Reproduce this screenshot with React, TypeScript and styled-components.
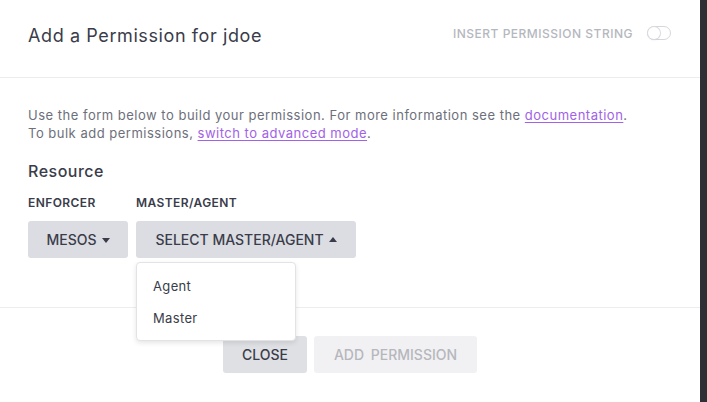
import React from 'react';
import styled, { createGlobalStyle } from 'styled-components';

const GlobalStyle = createGlobalStyle`
  html, body {
    margin: 0;
    padding: 0;
    background: #ffffff;
  }
  body {
    font-family: Inter, "Noto Sans", sans-serif;
    color: #3a3c4a;
    -webkit-font-smoothing: antialiased;
  }
  * {
    box-sizing: border-box;
  }
`;

const Page = styled.div`
  display: flex;
  width: 707px;
  height: 402px;
  overflow: hidden;
`;

const Modal = styled.div`
  width: 700px;
  display: flex;
  flex-direction: column;
  background: #ffffff;
`;

const Backdrop = styled.div`
  flex: 1;
  background: #2e3035;
`;

const Header = styled.div`
  height: 78px;
  padding: 0 29px 6px 28px;
  display: flex;
  align-items: center;
  justify-content: space-between;
  border-bottom: 1px solid #ededf0;
`;

const Title = styled.h1`
  margin: 0;
  font-size: 18px;
  line-height: 22px;
  font-weight: 400;
  letter-spacing: 0.6px;
  color: #3a3c4a;
`;

const ToggleGroup = styled.label`
  display: flex;
  align-items: center;
  gap: 14px;
  margin-bottom: 5px;
`;

const ToggleLabel = styled.span`
  font-size: 12px;
  font-weight: 500;
  letter-spacing: 0.5px;
  color: #b5b7be;
  text-transform: uppercase;
`;

const Toggle = styled.span`
  display: inline-block;
  width: 24px;
  height: 14px;
  border-radius: 7px;
  border: 1px solid #d6d7dc;
  position: relative;

  &::after {
    content: '';
    position: absolute;
    left: 0;
    top: 0;
    width: 12px;
    height: 12px;
    border-radius: 50%;
    background: #ffffff;
    box-shadow: 0 0 0 1px #dadbe0, 0 1px 2px rgba(0, 0, 0, 0.12);
  }
`;

const Body = styled.div`
  padding: 28px 28px 49px;
  border-bottom: 1px solid #ededf0;
`;

const Intro = styled.p`
  margin: 0;
  font-size: 13px;
  line-height: 18px;
  color: #6d6f7b;
  letter-spacing: 0.5px;
`;

const TextLink = styled.a`
  color: #a162e8;
  text-decoration: underline;
  text-underline-offset: 2px;
`;

const SectionTitle = styled.h2`
  margin: 19px 0 14px;
  font-size: 16px;
  line-height: 20px;
  font-weight: 500;
  letter-spacing: 0.5px;
  color: #3a3c4a;
`;

const Fields = styled.div`
  display: flex;
  gap: 8px;
`;

const Field = styled.div`
  display: flex;
  flex-direction: column;
  gap: 10px;
  position: relative;
`;

const FieldLabel = styled.span`
  font-size: 12px;
  line-height: 16px;
  font-weight: 600;
  letter-spacing: 0.4px;
  color: #3a3c4a;
  text-transform: uppercase;
`;

const SelectButton = styled.button<{ width: number }>`
  width: ${p => p.width}px;
  height: 37px;
  border: none;
  border-radius: 3px;
  background: #dcdde2;
  color: #3a3c4a;
  font-family: inherit;
  font-size: 14px;
  font-weight: 500;
  text-transform: uppercase;
  display: flex;
  align-items: center;
  justify-content: center;
  gap: 5px;
  cursor: pointer;
`;

const Caret = styled.span<{ up?: boolean }>`
  width: 0;
  height: 0;
  border-left: 4.5px solid transparent;
  border-right: 4.5px solid transparent;
  ${p => p.up
    ? 'border-bottom: 5px solid #3a3c4a;'
    : 'border-top: 5px solid #3a3c4a;'}
  margin-top: ${p => (p.up ? '-1px' : '1px')};
`;

const Menu = styled.ul`
  position: absolute;
  top: 67px;
  left: 0;
  width: 160px;
  margin: 0;
  padding: 7px 0 6px;
  list-style: none;
  background: #ffffff;
  border: 1px solid #e2e3e7;
  border-radius: 4px;
  box-shadow: 0 2px 5px rgba(0, 0, 0, 0.1);
  z-index: 10;
`;

const MenuItem = styled.li`
  height: 32px;
  padding: 0 16px;
  display: flex;
  align-items: center;
  font-size: 13px;
  color: #3a3c4a;
  letter-spacing: 0.35px;
`;

const Footer = styled.div`
  flex: 1;
  display: flex;
  justify-content: center;
  align-items: flex-start;
  gap: 7px;
  padding-top: 28px;
`;

const FooterButton = styled.button<{ disabled?: boolean; width: number }>`
  width: ${p => p.width}px;
  height: 37px;
  border: none;
  border-radius: 3px;
  font-family: inherit;
  font-size: 14px;
  font-weight: 500;
  text-transform: uppercase;
  word-spacing: 3px;
  background: ${p => (p.disabled ? '#f1f1f3' : '#dfe0e4')};
  color: ${p => (p.disabled ? '#b6b7bd' : '#3a3c4a')};
`;

const App: React.FC = () => (
  <>
    <GlobalStyle />
    <Page>
      <Modal>
        <Header>
          <Title>Add a Permission for jdoe</Title>
          <ToggleGroup>
            <ToggleLabel>Insert Permission String</ToggleLabel>
            <Toggle />
          </ToggleGroup>
        </Header>
        <Body>
          <Intro>
            Use the form below to build your permission. For more information see the{' '}
            <TextLink href="#">documentation</TextLink>.
            <br />
            To bulk add permissions, <TextLink href="#">switch to advanced mode</TextLink>.
          </Intro>
          <SectionTitle>Resource</SectionTitle>
          <Fields>
            <Field>
              <FieldLabel>Enforcer</FieldLabel>
              <SelectButton width={100}>
                Mesos <Caret />
              </SelectButton>
            </Field>
            <Field>
              <FieldLabel>Master/Agent</FieldLabel>
              <SelectButton width={220}>
                Select Master/Agent <Caret up />
              </SelectButton>
              <Menu>
                <MenuItem>Agent</MenuItem>
                <MenuItem>Master</MenuItem>
              </Menu>
            </Field>
          </Fields>
        </Body>
        <Footer>
          <FooterButton width={84}>Close</FooterButton>
          <FooterButton width={163} disabled>Add Permission</FooterButton>
        </Footer>
      </Modal>
      <Backdrop />
    </Page>
  </>
);

export default App;
